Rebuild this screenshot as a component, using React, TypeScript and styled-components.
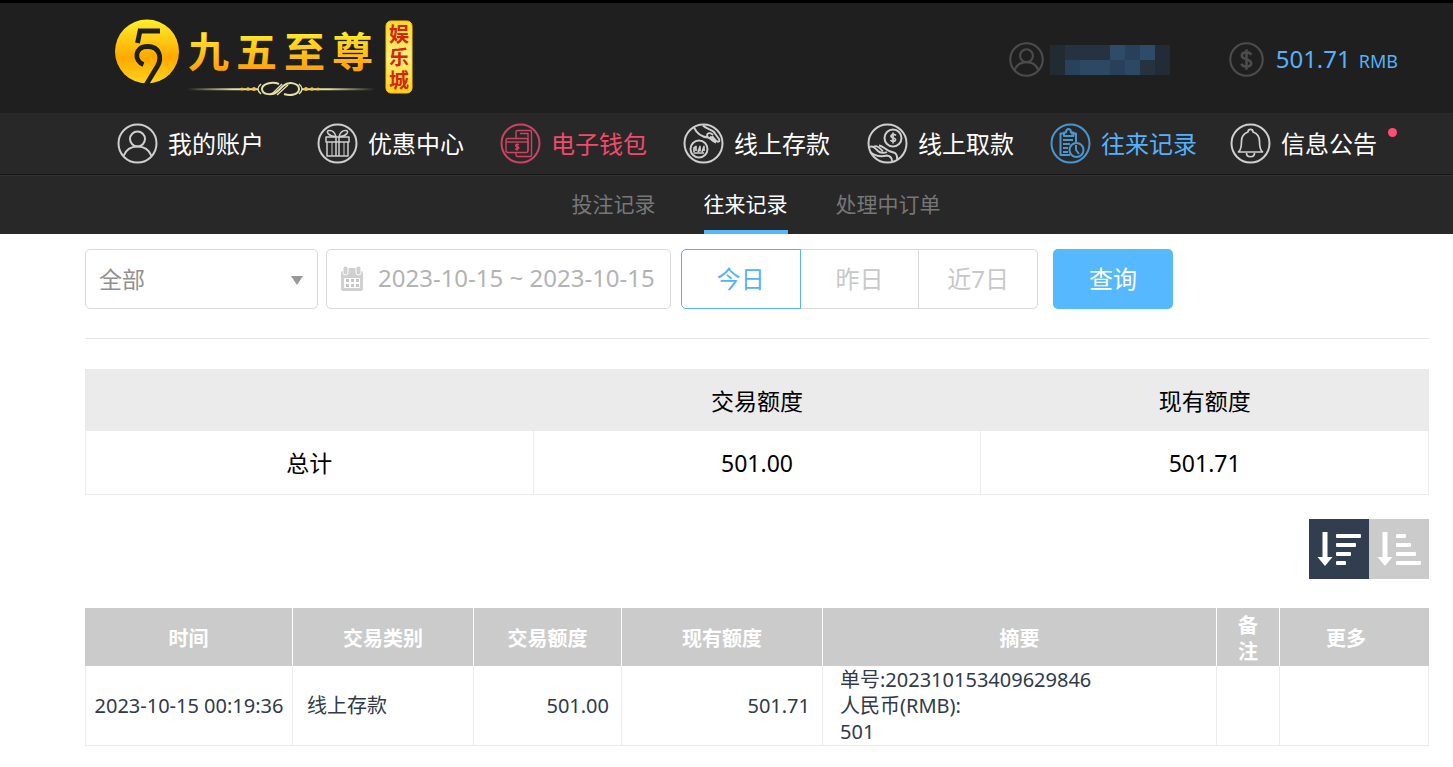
import React from 'react';
import styled, { createGlobalStyle, css } from 'styled-components';

const fontStack = '"Noto Sans", "Noto Sans CJK SC", sans-serif';

const GlobalStyle = createGlobalStyle`
  *, *::before, *::after { box-sizing: border-box; }
  body { margin: 0; background: #fff; color: #000; font-family: ${fontStack}; }
  button, input, select { font-family: inherit; margin: 0; }
`;

const Header = styled.header`
  border-top: 3px solid #000;
  background: #1f1f1f;
`;

const TopBar = styled.div`
  display: flex;
  align-items: center;
  justify-content: space-between;
  height: 110px;
  padding: 0 55px 0 112px;
`;

const LogoLink = styled.a`
  display: block;
  svg { display: block; }
`;

const AccountInfo = styled.div`
  display: flex;
  align-items: center;
  gap: 58px;
  padding-top: 3px;
`;

const AccountItem = styled.div<{ $gap: number }>`
  display: flex;
  align-items: center;
  gap: ${(p) => p.$gap}px;
  color: #56b1fb;
  svg { display: block; }
`;

const Balance = styled.span`
  font-size: 24px;
  line-height: 34px;
`;

const Currency = styled.span`
  margin-left: 8px;
  font-size: 18px;
`;

const Nav = styled.nav`
  display: grid;
  grid-template-columns: 200fr 183fr 183fr 184fr 183fr 180fr 170fr;
  height: 62px;
  padding: 0 53px 0 117px;
  background: #282828;
  border-bottom: 1px solid #161616;
`;

const NavLink = styled.a<{ $color: string }>`
  display: flex;
  align-items: center;
  gap: 10px;
  color: ${(p) => p.$color};
  font-size: 24px;
  line-height: 36px;
  white-space: nowrap;
  text-decoration: none;
  svg { flex: none; display: block; }
`;

const IconTone = styled.span<{ $color: string }>`
  color: ${(p) => p.$color};
`;

const NavLabel = styled.span`
  position: relative;
`;

const NoticeDot = styled.i`
  position: absolute;
  top: 2px;
  right: -20px;
  width: 9px;
  height: 9px;
  border-radius: 50%;
  background: #ff4d73;
`;

const SubNav = styled.nav`
  display: flex;
  justify-content: center;
  gap: 48px;
  height: 59px;
  padding: 0 26px 0 85px;
  background: #282828;
  border-top: 1px solid #323232;
`;

const SubLink = styled.a<{ $active?: boolean }>`
  padding-top: 12px;
  border-bottom: 4px solid ${(p) => (p.$active ? '#56b7fb' : 'transparent')};
  color: ${(p) => (p.$active ? '#fff' : '#777')};
  font-size: 21px;
  line-height: 32px;
  text-decoration: none;
`;

const Main = styled.main`
  padding: 15px 24px 22px 85px;
`;

const Filters = styled.form`
  display: flex;
  align-items: stretch;
  height: 90px;
  padding-bottom: 29px;
  border-bottom: 1px solid #e6e6e6;
`;

const SelectBox = styled.div`
  position: relative;
  width: 233px;
  margin-right: 8px;
  svg {
    position: absolute;
    top: 27px;
    right: 14px;
    pointer-events: none;
  }
`;

const fieldBorder = css`
  border: 1px solid #d9d9d9;
  border-radius: 5px;
  background: #fff;
`;

const Select = styled.select`
  ${fieldBorder}
  appearance: none;
  width: 100%;
  height: 60px;
  padding: 0 36px 0 13px;
  color: #909090;
  font-size: 23px;
`;

const DateBox = styled.label`
  ${fieldBorder}
  display: flex;
  align-items: center;
  gap: 13px;
  width: 345px;
  margin-right: 10px;
  padding-left: 12px;
  svg { flex: none; display: block; }
`;

const DateInput = styled.input`
  flex: 1;
  min-width: 0;
  padding: 0 0 4px;
  border: 0;
  outline: 0;
  background: none;
  color: #b3b3b3;
  font-size: 24px;
`;

const RangeGroup = styled.div`
  display: flex;
  width: 357px;
  margin-right: 15px;
`;

const RangeButton = styled.button<{ $active?: boolean }>`
  position: relative;
  z-index: ${(p) => (p.$active ? 1 : 0)};
  flex: 1 1 0;
  margin-right: -1px;
  padding: 0 0 3px;
  border: 1px solid ${(p) => (p.$active ? '#56b1f5' : '#d9d9d9')};
  background: #fff;
  color: ${(p) => (p.$active ? '#56b1f5' : '#c8c8c8')};
  font-size: 24px;
  &:first-child { border-radius: 5px 0 0 5px; }
  &:last-child { margin-right: 0; border-radius: 0 5px 5px 0; }
`;

const QueryButton = styled.button`
  width: 120px;
  padding: 0 0 3px;
  border: 0;
  border-radius: 5px;
  background: #56b8ff;
  color: #fff;
  font-size: 24px;
`;

const SummaryTable = styled.table`
  width: 100%;
  margin-top: 30px;
  table-layout: fixed;
  border-collapse: collapse;
  font-size: 23px;
  line-height: 32px;
  text-align: center;
  th, td { padding: 0; font-weight: 400; border: 1px solid #ebebeb; }
  thead th { padding-top: 2px; }
  thead tr { height: 61px; background: #ebebeb; }
  tbody tr { height: 64px; }
`;

const SortBar = styled.div`
  display: flex;
  justify-content: flex-end;
  padding: 24px 0 29px;
`;

const SortButton = styled.button<{ $active?: boolean }>`
  width: 60px;
  height: 60px;
  padding: 0;
  border: 0;
  background: ${(p) => (p.$active ? '#303e50' : '#cbcbcb')};
  svg { display: block; }
`;

const RecordTable = styled.table`
  width: 100%;
  table-layout: fixed;
  border-collapse: separate;
  border-spacing: 0;
  color: #303a48;
  font-size: 20px;
  line-height: 26px;
  thead { background: #cbcbcb; color: #fff; }
  thead tr { height: 58px; }
  thead th { padding: 3px 18px 0; border-right: 1px solid #fff; }
  thead th:last-child { padding-right: 34px; border-right-color: #cbcbcb; }
  tbody td:first-child { border-left: 1px solid #ebebeb; }
`;

const Cell = styled.td<{ $align?: 'left' | 'right' | 'center' }>`
  padding: 1px ${(p) => (p.$align === 'right' ? 12 : p.$align === 'center' ? 0 : 14)}px 0;
  border: solid #ebebeb;
  border-width: 0 1px 1px 0;
  text-align: ${(p) => p.$align || 'left'};
  white-space: nowrap;
`;

const Detail = styled.div`
  padding-left: 3px;
`;

function Logo() {
  const cjk = '"Noto Sans CJK SC", sans-serif';
  return (
    <svg width="304" height="84" viewBox="0 0 304 84" role="img" aria-label="九五至尊娱乐城">
      <defs>
        <linearGradient id="gold" x1="0" y1="0" x2="0" y2="1">
          <stop offset="0" stopColor="#fff02a" />
          <stop offset="0.6" stopColor="#ffa800" />
          <stop offset="1" stopColor="#ffd51c" />
        </linearGradient>
        <linearGradient id="seal" x1="0" y1="0" x2="0" y2="1">
          <stop offset="0" stopColor="#ffd92a" />
          <stop offset="0.5" stopColor="#fff07a" />
          <stop offset="1" stopColor="#ffd21c" />
        </linearGradient>
        <linearGradient id="title" gradientUnits="userSpaceOnUse" x1="0" y1="14" x2="0" y2="56">
          <stop offset="0" stopColor="#fff02a" />
          <stop offset="1" stopColor="#ff9c0a" />
        </linearGradient>
        <linearGradient id="rule" gradientUnits="userSpaceOnUse" x1="75" y1="0" x2="263" y2="0">
          <stop offset="0" stopColor="#e8dfa8" stopOpacity="0" />
          <stop offset="0.25" stopColor="#e8dfa8" />
          <stop offset="0.75" stopColor="#e8dfa8" />
          <stop offset="1" stopColor="#e8dfa8" stopOpacity="0" />
        </linearGradient>
      </defs>
      <circle cx="35" cy="35.5" r="32" fill="url(#gold)" />
      <g fill="none" stroke="#1f1f1f" strokeWidth="4.8">
        <path d="M48 15H28L25.500 27" />
        <path d="M31.500 48.500C22 45 22 30.500 35.500 30.500C48 30.500 50 42 45.500 50L34 69" />
      </g>
      <g fill="url(#title)" fontFamily={cjk} fontWeight="700" fontSize="41">
        <text x="76" y="51">九</text>
        <text x="124" y="51">五</text>
        <text x="172" y="51">至</text>
        <text x="220" y="51">尊</text>
      </g>
      <path d="M75 73H146M190 73H263M75 73.500H146M190 73.500H263" stroke="url(#rule)" strokeWidth="1.400" />
      <g fill="none" stroke="#e8dfa8" strokeWidth="1.400">
        <path d="M149 68Q143 73 149 78M187 68Q193 73 187 78" />
        <path d="M167 68C160 65 150 68 150 73C150 79 161 80 166 75L171 70C177 65 187 67 187 73C187 79 178 80 172 78" strokeWidth="2" />
        <path d="M160 78L170 68M165 79L176 69" />
      </g>
      <g fill="#f0c63c">
        <circle cx="130" cy="73" r="1.600" />
        <circle cx="136" cy="73" r="1.800" />
        <circle cx="142" cy="73" r="2" />
        <circle cx="194" cy="73" r="2" />
        <circle cx="200" cy="73" r="1.800" />
        <circle cx="206" cy="73" r="1.600" />
      </g>
      <rect x="274" y="5" width="26" height="72" rx="5" fill="url(#seal)" stroke="#ffc40c" />
      <g fill="#d0260c" fontFamily={cjk} fontWeight="700" fontSize="20">
        <text x="277" y="26">娱</text>
        <text x="277" y="49">乐</text>
        <text x="277" y="72">城</text>
      </g>
    </svg>
  );
}

function RoundIcon({ size = 41, width = 2, children }: { size?: number; width?: number; children: React.ReactNode }) {
  return (
    <svg width={size} height={size} viewBox="0 0 41 41" fill="none" stroke="currentColor" strokeWidth={width} strokeLinejoin="round" aria-hidden="true">
      <circle cx="20.5" cy="20.5" r="19" />
      {children}
    </svg>
  );
}

const userShape = (
  <>
    <circle cx="20.5" cy="16" r="7.5" />
    <path d="M6.500 33C9 26.500 14.500 23.500 20.500 23.500S32 26.500 34.500 33" />
  </>
);

const giftShape = (
  <g strokeWidth="1.5">
    <rect x="9" y="14" width="23" height="5" />
    <path d="M10 19V33H31V19M19 14V33M22 14V33" />
    <path d="M15 19V33M27 19V33" strokeWidth="1" />
    <path d="M19 13.500C12 14 8 8 12 7.500C16 7 18 10 19 13.500ZM22 13.500C29 14 33 8 29 7.500C25 7 23 10 22 13.500Z" />
  </g>
);

const walletShape = (
  <g strokeWidth="1.4">
    <path d="M16 15V9Q16 7.500 17.500 7.500H30Q31.500 7.500 31.500 9V32Q31.500 33.500 30 33.500H17.500Q16 33.500 16 32V30" />
    <path d="M20 10.500H28V28" />
    <rect x="6" y="15.500" width="22" height="14" rx="2" />
    <path d="M6 19H28" />
    <path d="M19 21.500H16.500Q15 22.500 16.500 23.500Q19.500 24 18.500 25.500Q18 26.500 15 26M17 20.500V27.500" strokeWidth="1.6" />
  </g>
);

const depositShape = (
  <>
    <circle cx="16" cy="26" r="8.500" />
    <path d="M11 29V25L13 23.500V28M15 29L17 23.500V28.500M19 29L21 23.500V28M10.500 30H21" strokeWidth="1.700" />
    <path d="M11 4.500C14 11 19 14 25 14.500C28 15 28 18 33 19.500M20 2.500C24 7 30 6 32 10.500L36 16C37.500 19 34 20 32 16.500L29 13M25 14.500C22 10.500 27 8.500 30 12M27 13.500L32 18.500" strokeWidth="1.900" />
  </>
);

const withdrawShape = (
  <>
    <circle cx="26" cy="15" r="8.500" />
    <path d="M29 12.500C27 10.500 23.500 11.500 24 13.500C24.500 15.500 29 14.500 28.500 17C28 19 24.500 18.500 23.500 17M26 9.500V20.500" strokeWidth="1.700" />
    <path d="M2.500 24C6 22.500 8 25 11 28M7 23.500C10 22 13 25 16 28.500M12 22.500C15 22.500 18 26 22 28L28 30C31 32 30 35 30 37M3 29C8 33 14 34 20 32.500C23 33 25 35 25 38M11 28C13 30 17 30.500 20 29" strokeWidth="1.900" />
  </>
);

const recordShape = (
  <g strokeWidth="2">
    <path d="M20 32H10.500V10.500H15M21 10.500H26V19" />
    <path d="M14 9.500H16Q16 6 18.500 6Q21 6 21 9.500H23.500V13H14Z" />
    <path d="M13 17H23M13 21H20M13 25H18M13 29H18" />
    <circle cx="26.500" cy="27" r="7" />
    <path d="M26 22V27L29 31" />
  </g>
);

const bellShape = (
  <g strokeWidth="1.700">
    <path d="M8.500 29C11 27 11.500 24 11.500 18C11.500 13 14 10.500 18 9C18 5.500 23 5.500 23 9C27 10.500 29.500 13 29.500 18C29.500 24 30 27 32.500 29Z" />
    <path d="M16.500 30C16.500 35 24.500 35 24.500 30" />
  </g>
);

const navItems = [
  { label: '我的账户', color: '#fff', tone: '#cfcfcf', icon: userShape },
  { label: '优惠中心', color: '#fff', tone: '#cfcfcf', icon: giftShape },
  { label: '电子钱包', color: '#f5486d', tone: '#cf4262', icon: walletShape },
  { label: '线上存款', color: '#fff', tone: '#cfcfcf', icon: depositShape },
  { label: '线上取款', color: '#fff', tone: '#cfcfcf', icon: withdrawShape },
  { label: '往来记录', color: '#56b1fb', tone: '#4a96cf', icon: recordShape },
  { label: '信息公告', color: '#fff', tone: '#cfcfcf', icon: bellShape, notice: true },
];

function MaskedName() {
  const rows = [
    ['#222a32', '#26323f', '#26323f', '#26323f', '#2e4b69', '#29405a', '#2e4b69', '#232c36'],
    ['#222a32', '#29425b', '#2d4862', '#2d4862', '#29405a', '#2d4862', '#25323f', '#232c36'],
  ];
  return (
    <svg width="121" height="30" viewBox="0 0 121 30" aria-hidden="true">
      {rows.map((row, y) =>
        row.map((fill, x) => <rect key={`${y}-${x}`} x={x * 15} y={y * 15} width="15" height="15" fill={fill} />),
      )}
    </svg>
  );
}

function CalendarIcon() {
  return (
    <svg width="26" height="28" viewBox="0 0 26 28" aria-hidden="true">
      <path d="M3 6H22Q24 6 24 8V24Q24 26 22 26H4Q2 26 2 24V8Q2 6 3 6Z" fill="#d0d0d0" />
      <rect x="9" y="3" width="8" height="6" fill="#d0d0d0" />
      <rect x="4" y="1" width="5" height="9" rx="2.500" fill="#d0d0d0" stroke="#fff" />
      <rect x="17" y="1" width="5" height="9" rx="2.500" fill="#d0d0d0" stroke="#fff" />
      <rect x="5" y="13" width="16" height="10" rx="1" fill="#fff" />
      <g fill="#c4c4c4">
        {[14, 19].map((y) => [7, 12, 17].map((x) => <rect key={`${x}-${y}`} x={x} y={y} width="3" height="3" />))}
      </g>
    </svg>
  );
}

function SortIcon({ bars }: { bars: number[] }) {
  return (
    <svg width="60" height="60" viewBox="0 0 60 60" fill="#fff" aria-hidden="true">
      <path d="M13.500 13H18.500V38H23.500L16 47L8.500 38H13.500Z" />
      {bars.map((w, i) => (
        <rect key={i} x="27" y={15 + i * 9} width={w} height="4" rx="1" />
      ))}
    </svg>
  );
}

const columns = [208, 181, 148, 201, 394, 63, 149];
const headings = ['时间', '交易类别', '交易额度', '现有额度', '摘要', '备注', '更多'];

export default function App() {
  return (
    <>
      <GlobalStyle />
      <Header>
        <TopBar>
          <LogoLink href="#"><Logo /></LogoLink>
          <AccountInfo>
            <AccountItem $gap={6}>
              <IconTone $color="#4c4c4c"><RoundIcon size={35} width={2.5}>{userShape}</RoundIcon></IconTone>
              <MaskedName />
            </AccountItem>
            <AccountItem $gap={12}>
              <IconTone $color="#4c4c4c">
                <RoundIcon size={35} width={2.5}>
                  <path d="M26 15C24 11 15 11 15 16C15 21 26 19.500 26 25C26 30 16 30 14.500 25.500M20.500 8.500V32.500" strokeWidth="3" />
                </RoundIcon>
              </IconTone>
              <Balance>501.71<Currency>RMB</Currency></Balance>
            </AccountItem>
          </AccountInfo>
        </TopBar>
        <Nav>
          {navItems.map((item) => (
            <NavLink key={item.label} href="#" $color={item.color}>
              <IconTone $color={item.tone}><RoundIcon>{item.icon}</RoundIcon></IconTone>
              <NavLabel>
                {item.label}
                {item.notice && <NoticeDot />}
              </NavLabel>
            </NavLink>
          ))}
        </Nav>
        <SubNav>
          <SubLink href="#">投注记录</SubLink>
          <SubLink href="#" $active>往来记录</SubLink>
          <SubLink href="#">处理中订单</SubLink>
        </SubNav>
      </Header>
      <Main>
        <Filters onSubmit={(e) => e.preventDefault()}>
          <SelectBox>
            <Select aria-label="交易类别" defaultValue="all">
              <option value="all">全部</option>
            </Select>
            <svg width="14" height="10" viewBox="0 0 14 10" fill="#999" aria-hidden="true">
              <path d="M1 0H13L7 9Z" />
            </svg>
          </SelectBox>
          <DateBox>
            <CalendarIcon />
            <DateInput aria-label="日期" defaultValue="2023-10-15 ~ 2023-10-15" />
          </DateBox>
          <RangeGroup>
            <RangeButton type="button" $active>今日</RangeButton>
            <RangeButton type="button">昨日</RangeButton>
            <RangeButton type="button">近7日</RangeButton>
          </RangeGroup>
          <QueryButton type="submit">查询</QueryButton>
        </Filters>
        <SummaryTable>
          <thead>
            <tr>
              <td />
              <th scope="col">交易额度</th>
              <th scope="col">现有额度</th>
            </tr>
          </thead>
          <tbody>
            <tr>
              <th scope="row">总计</th>
              <td>501.00</td>
              <td>501.71</td>
            </tr>
          </tbody>
        </SummaryTable>
        <SortBar>
          <SortButton type="button" $active aria-label="降序"><SortIcon bars={[25, 20, 15, 10]} /></SortButton>
          <SortButton type="button" aria-label="升序"><SortIcon bars={[10, 15, 20, 25]} /></SortButton>
        </SortBar>
        <RecordTable>
          <colgroup>
            {columns.map((w, i) => <col key={i} width={w} />)}
          </colgroup>
          <thead>
            <tr>
              {headings.map((h) => <th key={h} scope="col">{h}</th>)}
            </tr>
          </thead>
          <tbody>
            <tr>
              <Cell $align="center">2023-10-15 00:19:36</Cell>
              <Cell>线上存款</Cell>
              <Cell $align="right">501.00</Cell>
              <Cell $align="right">501.71</Cell>
              <Cell>
                <Detail>单号:202310153409629846</Detail>
                <Detail>人民币(RMB):</Detail>
                <Detail>501</Detail>
              </Cell>
              <Cell />
              <Cell />
            </tr>
          </tbody>
        </RecordTable>
      </Main>
    </>
  );
}
